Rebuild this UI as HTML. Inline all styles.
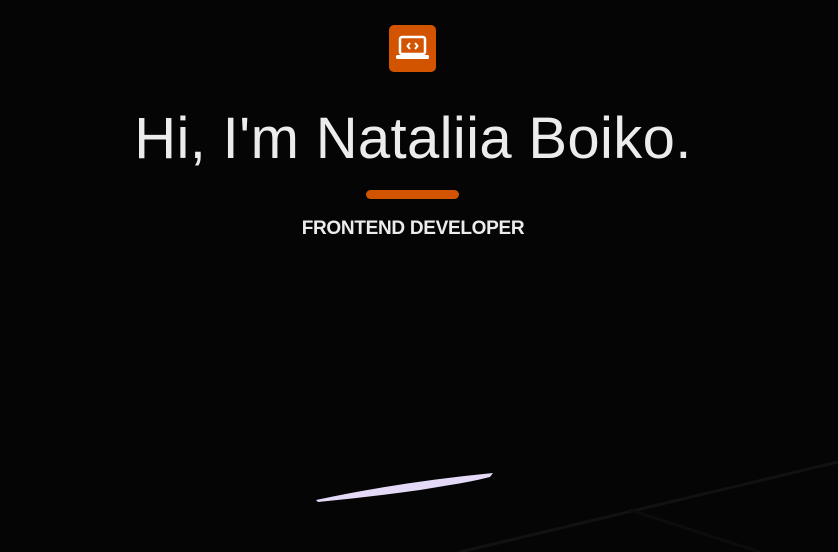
<!DOCTYPE html>
<html><head><style>
html,body{margin:0;padding:0}
body{width:838px;height:552px;background:#050505;position:relative;overflow:hidden;font-family:"Liberation Sans",sans-serif}
.icon{position:absolute;left:389px;top:25px;width:47px;height:47px;background:#d35400;border-radius:5px}
h1{position:absolute;left:0;width:826px;top:105px;margin:0;text-align:center;color:#ececec;font-weight:400;font-size:58px;letter-spacing:0.35px;white-space:nowrap}
.bar{position:absolute;left:366px;top:190px;width:93px;height:9px;background:#d35400;border-radius:5px}
.sub{position:absolute;left:0;width:826px;top:218px;text-align:center;color:#ececec;font-weight:700;font-size:19px;letter-spacing:-0.3px}
</style></head><body>
<div class="icon"><svg width="47" height="47" viewBox="0 0 47 47">
<rect x="11" y="12" width="25" height="17" rx="2" fill="none" stroke="#fff" stroke-width="2.5"/>
<rect x="7" y="30" width="33" height="4" rx="1.5" fill="#fff"/>
<path d="M21 18l-2.5 3 2.5 3M26 18l2.5 3-2.5 3" fill="none" stroke="#fff" stroke-width="2"/>
</svg></div>
<h1>Hi, I'm Nataliia Boiko.</h1>
<div class="bar"></div>
<div class="sub">FRONTEND DEVELOPER</div>
<svg width="838" height="552" style="position:absolute;left:0;top:0">
<path d="M316 500 Q400 482 493 473 L490 477 Q470 482 450 485 L420 490 Q370 497 318 502 Z" fill="#e4daf7"/>
<path d="M460 552 L838 462" stroke="#111" stroke-width="3"/>
<path d="M630 510 L760 552" stroke="#0c0c0c" stroke-width="3"/>
</svg>
</body></html>
